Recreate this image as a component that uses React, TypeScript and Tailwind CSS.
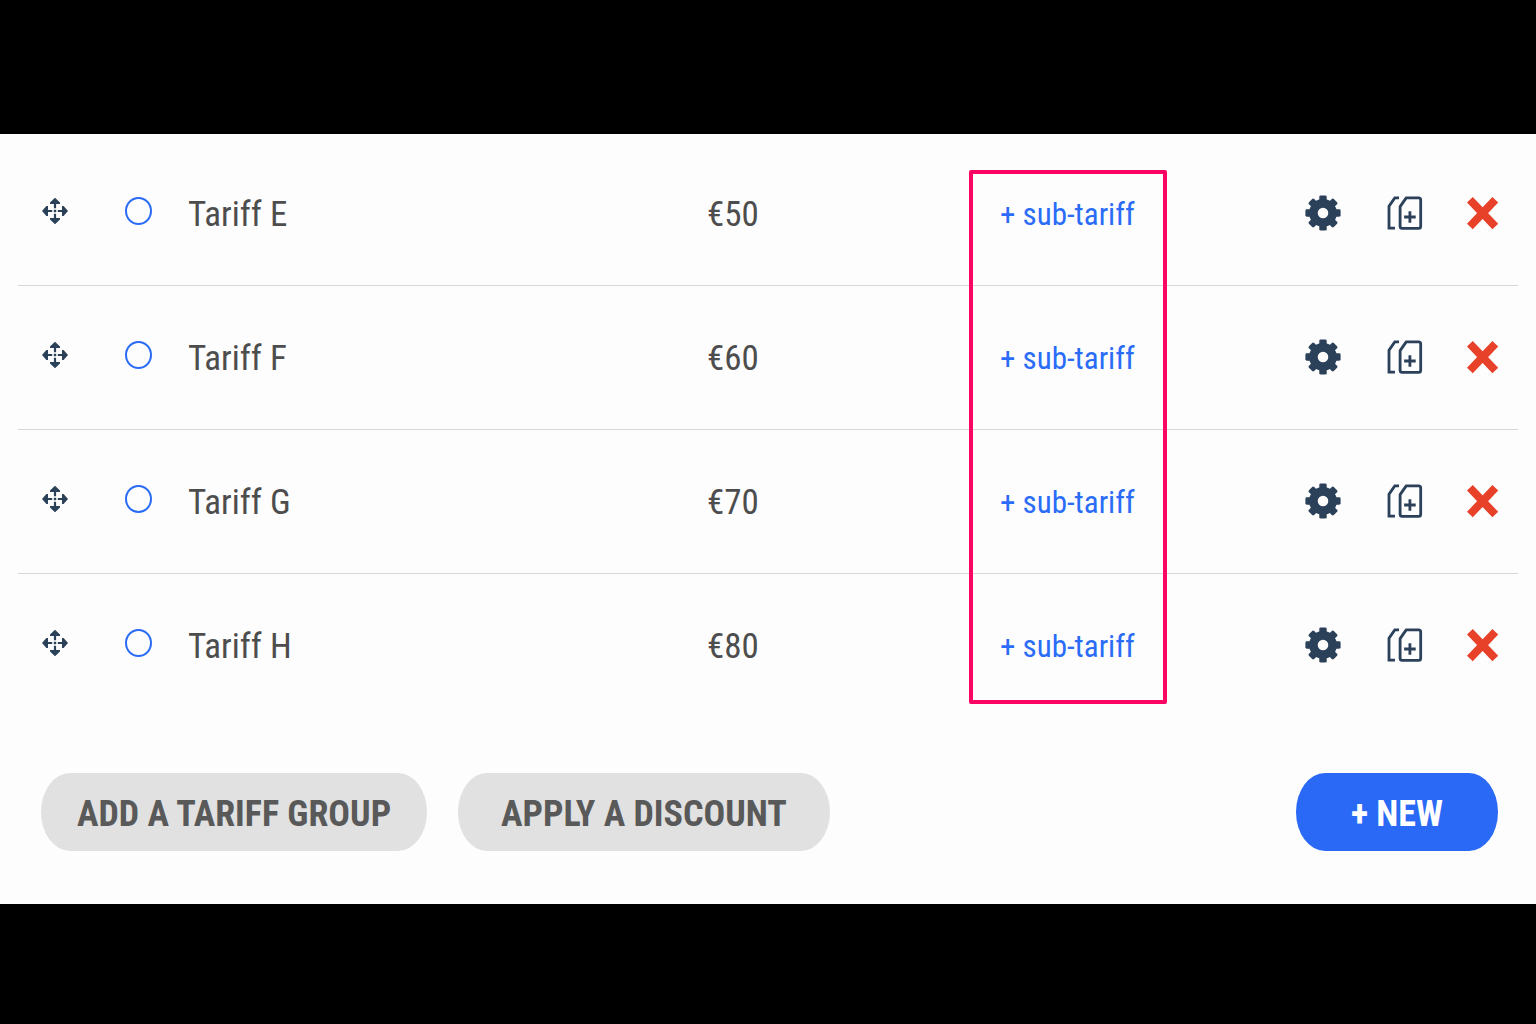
import type { ReactNode } from "react";

const tariffs = [
  { id: "e", name: "Tariff E", price: "€50" },
  { id: "f", name: "Tariff F", price: "€60" },
  { id: "g", name: "Tariff G", price: "€70" },
  { id: "h", name: "Tariff H", price: "€80" },
];

const toothAngles = [0, 45, 90, 135, 180, 225, 270, 315];

function MoveIcon() {
  return (
    <svg viewBox="0 0 26 28" className="block h-7 w-[26px]" fill="#2b4059">
      <path d="M13 0.8 18 5.4V7H14.1V11.2H11.9V7H8V5.4Z" />
      <path d="M13 27.2 18 22.6V21H14.1V16.8H11.9V21H8V22.6Z" />
      <path d="M0 14 4.4 9H6V12.9H10.2V15.1H6V19H4.4Z" />
      <path d="M26 14 21.6 9H20V12.9H15.8V15.1H20V19H21.6Z" />
      <rect x="11.8" y="12.8" width="2.4" height="2.4" />
    </svg>
  );
}

function GearIcon() {
  return (
    <svg viewBox="0 0 36 36" className="block size-9" fill="#2b4059">
      {toothAngles.map((angle) => (
        <rect
          key={angle}
          x="14.3"
          y="0.4"
          width="7.4"
          height="8"
          rx="1.4"
          transform={`rotate(${angle} 18 18)`}
        />
      ))}
      <circle cx="18" cy="18" r="9.6" fill="none" stroke="#2b4059" strokeWidth="8.6" />
    </svg>
  );
}

function DuplicateIcon() {
  return (
    <svg viewBox="0 0 36 36" className="block size-9 overflow-visible" fill="none" stroke="#2b4059" strokeWidth="2.8">
      <path d="M14 2.9H9.8L4 11.2V33.2H10" />
      <path
        d="M21.2 2.9H33.6Q35.7 2.9 35.7 5V31.2Q35.7 33.3 33.6 33.3H17.2Q15.1 33.3 15.1 31.2V11.6Z"
        strokeLinejoin="round"
      />
      <path d="M24.9 16.2V27.8M19.1 22H30.7" />
    </svg>
  );
}

function DeleteIcon() {
  return (
    <svg viewBox="0 0 34 36" className="block h-9 w-[34px]" fill="none" stroke="#e8412a" strokeWidth="8">
      <path d="M4.9 4.8 30.3 31.6M30.3 4.8 4.9 31.6" />
    </svg>
  );
}

function IconButton({ label, children }: { label: string; children: ReactNode }) {
  return (
    <button type="button" aria-label={label} className="block cursor-pointer">
      {children}
    </button>
  );
}

export default function App() {
  return (
    <div className="min-h-screen bg-black pt-[134px] font-['Roboto_Condensed',Roboto,sans-serif]">
      <main className="bg-[#fdfdfd] pt-[7px] pb-[53px]">
        <div className="relative mx-[18px]">
          <table className="w-full table-fixed text-left text-[#4d4d4d]">
            <colgroup>
              <col className="w-[83px]" />
              <col className="w-[87px]" />
              <col />
              <col className="w-[293px]" />
              <col className="w-[288px]" />
              <col className="w-[230px]" />
            </colgroup>
            <tbody>
              {tariffs.map((tariff) => (
                <tr key={tariff.id} className="h-36 border-b border-[#d8d8d8] last:border-b-0">
                  <td className="pb-1 pl-6">
                    <IconButton label={`Move ${tariff.name}`}>
                      <MoveIcon />
                    </IconButton>
                  </td>
                  <td className="pb-1 pl-6">
                    <input
                      id={`tariff-${tariff.id}`}
                      type="radio"
                      name="tariff"
                      className="block h-7 w-[27px] appearance-none rounded-[50%] border-2 border-[#2a6cf6]"
                    />
                  </td>
                  <td className="pt-1 text-[35px]">
                    <label htmlFor={`tariff-${tariff.id}`}>{tariff.name}</label>
                  </td>
                  <td className="pt-1 text-[35px]">{tariff.price}</td>
                  <td className="pt-1 text-[31px]">
                    <a href="#" className="text-[#2a6cf6]">
                      + sub-tariff
                    </a>
                  </td>
                  <td className="pr-[19px]">
                    <div className="flex items-center justify-end gap-11">
                      <IconButton label={`Settings for ${tariff.name}`}>
                        <GearIcon />
                      </IconButton>
                      <IconButton label={`Duplicate ${tariff.name}`}>
                        <DuplicateIcon />
                      </IconButton>
                      <IconButton label={`Delete ${tariff.name}`}>
                        <DeleteIcon />
                      </IconButton>
                    </div>
                  </td>
                </tr>
              ))}
            </tbody>
          </table>
          {/* highlight around the sub-tariff column */}
          <div className="pointer-events-none absolute top-[29px] right-[351px] bottom-[13px] w-[198px] rounded-xs border-4 border-[#fb0463]" />
        </div>

        <div className="mt-14 flex items-center gap-[31px] pr-[38px] pl-[41px] text-[36px] font-bold">
          <button type="button" className="h-[78px] rounded-[29px/39px] bg-[#e1e1e1] px-9 pt-1 text-[#595959]">
            ADD A TARIFF GROUP
          </button>
          <button type="button" className="h-[78px] rounded-[29px/39px] bg-[#e1e1e1] px-[43px] pt-1 text-[#595959]">
            APPLY A DISCOUNT
          </button>
          <button type="button" className="ml-auto h-[78px] rounded-[29px/39px] bg-[#2969f6] px-[55px] pt-1 text-white">
            + NEW
          </button>
        </div>
      </main>
    </div>
  );
}
